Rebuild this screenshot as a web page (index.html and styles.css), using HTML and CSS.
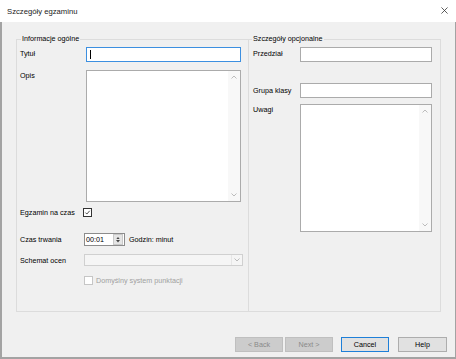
FILE: index.html
```html
<!DOCTYPE html>
<html lang="pl">
<head>
    <meta charset="UTF-8">
    <title>Szczegóły egzaminu</title>
    <link rel="stylesheet" href="styles.css">
</head>
<body>
    <div class="dialog">
        <div class="titlebar">
            <span class="title">Szczegóły egzaminu</span>
            <svg class="close" viewBox="0 0 8 8"><path d="M0.5 0.5 L7.5 7.5 M7.5 0.5 L0.5 7.5"/></svg>
        </div>

        <div class="client">
            <div class="groups">
                <div class="group group-general">
                    <div class="group-title">Informacje ogólne</div>

                    <div class="field field-title">
                        <span class="label">Tytuł</span>
                        <div class="textbox is-focused"><span class="caret"></span></div>
                    </div>

                    <div class="field field-desc">
                        <span class="label">Opis</span>
                        <div class="textarea textarea-desc">
                            <div class="scrollbar">
                                <svg class="chev" viewBox="0 0 6 4"><path d="M0.5 3.5 L3 1 L5.5 3.5"/></svg>
                                <svg class="chev" viewBox="0 0 6 4"><path d="M0.5 0.5 L3 3 L5.5 0.5"/></svg>
                            </div>
                        </div>
                    </div>

                    <div class="field field-timed">
                        <span class="label">Egzamin na czas</span>
                        <span class="checkbox is-checked">
                            <svg viewBox="0 0 9 9"><path d="M1.8 4.6 L3.7 6.5 L7.3 2.3"/></svg>
                        </span>
                    </div>

                    <div class="field field-duration">
                        <span class="label">Czas trwania</span>
                        <div class="spinner">
                            <span class="spinner-value">00:01</span>
                            <span class="spin">
                                <svg viewBox="0 0 5 3"><path d="M0 3 L2.5 0 L5 3 Z"/></svg>
                                <svg viewBox="0 0 5 3"><path d="M0 0 L2.5 3 L5 0 Z"/></svg>
                            </span>
                        </div>
                        <span class="unit">Godzin: minut</span>
                    </div>

                    <div class="field field-scheme">
                        <span class="label">Schemat ocen</span>
                        <div class="combo is-disabled">
                            <span class="combo-value"></span>
                            <span class="combo-arrow">
                                <svg class="chev" viewBox="0 0 6 4"><path d="M0.5 0.5 L3 3 L5.5 0.5"/></svg>
                            </span>
                        </div>
                    </div>

                    <div class="field field-default">
                        <span class="checkbox is-disabled"></span>
                        <span class="check-text">Domyślny system punktacji</span>
                    </div>
                </div>

                <div class="group group-optional">
                    <div class="group-title">Szczegóły opcjonalne</div>

                    <div class="field field-section">
                        <span class="label">Przedział</span>
                        <div class="textbox"></div>
                    </div>

                    <div class="field field-class">
                        <span class="label">Grupa klasy</span>
                        <div class="textbox"></div>
                    </div>

                    <div class="field field-notes">
                        <span class="label">Uwagi</span>
                        <div class="textarea textarea-notes">
                            <div class="scrollbar">
                                <svg class="chev" viewBox="0 0 6 4"><path d="M0.5 3.5 L3 1 L5.5 3.5"/></svg>
                                <svg class="chev" viewBox="0 0 6 4"><path d="M0.5 0.5 L3 3 L5.5 0.5"/></svg>
                            </div>
                        </div>
                    </div>
                </div>
            </div>

            <div class="buttons">
                <button class="btn btn-back" disabled>&lt; Back</button>
                <button class="btn btn-next" disabled>Next &gt;</button>
                <button class="btn btn-cancel">Cancel</button>
                <button class="btn btn-help">Help</button>
            </div>
        </div>
    </div>
</body>
</html>
```

FILE: styles.css
```css
* {
    box-sizing: border-box;
}

body {
    margin: 0;
    font-family: "Liberation Sans", Arial, sans-serif;
    font-size: 7.2px;
    color: #000;
    background: #fff;
}

.dialog {
    width: 456px;
    height: 359px;
    display: flex;
    flex-direction: column;
}

/* title bar */
.titlebar {
    height: 22px;
    flex: none;
    display: flex;
    align-items: center;
    justify-content: space-between;
    padding: 1px 8px 0 7px;
    background: #fff;
}

.title {
    font-size: 7.7px;
    color: #1a1a1a;
}

.close {
    width: 7px;
    height: 7px;
    margin-top: -2px;
}

.close path {
    stroke: #333;
    stroke-width: 0.9;
    fill: none;
}

/* client area */
.client {
    flex: 1;
    display: flex;
    flex-direction: column;
    background: #f0f0f0;
    border: solid #a3a3a3;
    border-width: 0 1px 2px 2px;
    padding: 17px 8px 0 14px;
}

.groups {
    display: flex;
    height: 273px;
}

.group {
    border: 1px solid #dcdcdc;
    height: 100%;
}

.group-general {
    width: 233px;
    padding: 0 7px 0 3px;
}

.group-optional {
    width: 193px;
    margin-left: -1px;
    padding: 0 8px 0 4px;
}

.group-title {
    width: max-content;
    height: 10px;
    line-height: 10px;
    margin: -6px 0 0 1px;
    padding: 0 1px;
    background: #f0f0f0;
}

.group-optional .group-title {
    margin-left: -1px;
}

.field {
    display: flex;
    align-items: center;
}

.label {
    width: 64px;
    flex: none;
}

.group-optional .label {
    width: 47px;
}

/* text inputs */
.textbox {
    flex: 1;
    height: 15px;
    background: #fff;
    border: 1px solid #ababab;
    display: flex;
    align-items: center;
}

.textbox.is-focused {
    border-color: #3c8fe0;
}

.caret {
    width: 1px;
    height: 9px;
    margin-left: 3px;
    background: #000;
}

.textarea {
    flex: 1;
    display: flex;
    justify-content: flex-end;
    background: #fff;
    border: 1px solid #ababab;
}

.scrollbar {
    width: 12px;
    display: flex;
    flex-direction: column;
    justify-content: space-between;
    align-items: center;
    padding: 4px 0;
    background: #f8f8f8;
}

.chev {
    width: 6px;
    height: 4px;
}

.chev path {
    fill: none;
    stroke: #b4b4b4;
    stroke-width: 0.9;
}

.field-title .textbox {
    margin-left: 2px;
}

.field-title,
.field-section {
    margin-top: 3px;
}

.field-title .label,
.field-section .label {
    align-self: flex-start;
    padding-top: 2px;
}

.field-desc,
.field-notes {
    align-items: flex-start;
}

.field-desc {
    margin-top: 8px;
}

.field-desc .label,
.field-notes .label {
    padding-top: 1px;
}

.textarea-desc {
    height: 132px;
    margin-left: 2px;
}

.field-class {
    margin-top: 21px;
}

.field-notes {
    margin-top: 6px;
}

.textarea-notes {
    height: 128px;
}

/* checkboxes */
.field-timed {
    margin-top: 6px;
}

.checkbox {
    width: 9px;
    height: 9px;
    flex: none;
    background: #fff;
    border: 1px solid #333;
    display: flex;
}

.checkbox svg {
    width: 100%;
    height: 100%;
}

.checkbox path {
    fill: none;
    stroke: #222;
    stroke-width: 1;
}

.field-timed .checkbox {
    margin-left: -1px;
}

.checkbox.is-disabled {
    border-color: #c6c6c6;
}

.field-default {
    margin-top: 10px;
    padding-left: 64px;
}

.check-text {
    margin-left: 3px;
    color: #a0a0a0;
}

/* spinner */
.field-duration {
    margin-top: 16px;
}

.spinner {
    width: 41px;
    height: 13px;
    display: flex;
    background: #fff;
    border: 1px solid #8c8c8c;
}

.spinner-value {
    flex: 1;
    line-height: 11px;
    padding-left: 1px;
}

.spin {
    width: 10px;
    margin: 0 1px 0 0;
    display: flex;
    flex-direction: column;
    align-items: center;
    justify-content: center;
    gap: 1px;
    background: #e5e5e5;
    border: 1px solid #c9c9c9;
}

.spin svg {
    width: 4px;
    height: 2.5px;
}

.spin path {
    fill: #444;
}

.unit {
    margin-left: 4px;
}

/* combo */
.field-scheme {
    margin-top: 8px;
}

.combo {
    flex: 1;
    height: 12px;
    margin-right: -2px;
    display: flex;
    background: #f5f5f5;
    border: 1px solid #d0d0d0;
}

.combo-value {
    flex: 1;
}

.combo-arrow {
    width: 11px;
    display: flex;
    align-items: center;
    justify-content: center;
    border-left: 1px solid #e6e6e6;
}

/* footer buttons */
.buttons {
    display: flex;
    justify-content: flex-end;
    margin-top: 25px;
}

.btn {
    width: 48px;
    height: 15px;
    padding: 0;
    font-family: inherit;
    font-size: 7.2px;
    color: #000;
    background: #e1e1e1;
    border: 1px solid #adadad;
    border-radius: 0;
}

.btn:disabled {
    color: #8a8a8a;
    background: #cccccc;
    border-color: #bfbfbf;
}

.btn-next {
    margin-left: 2px;
}

.btn-cancel {
    margin-left: 8px;
    border-color: #1e7fd8;
}

.btn-help {
    width: 49px;
    margin-left: 9px;
}
```
